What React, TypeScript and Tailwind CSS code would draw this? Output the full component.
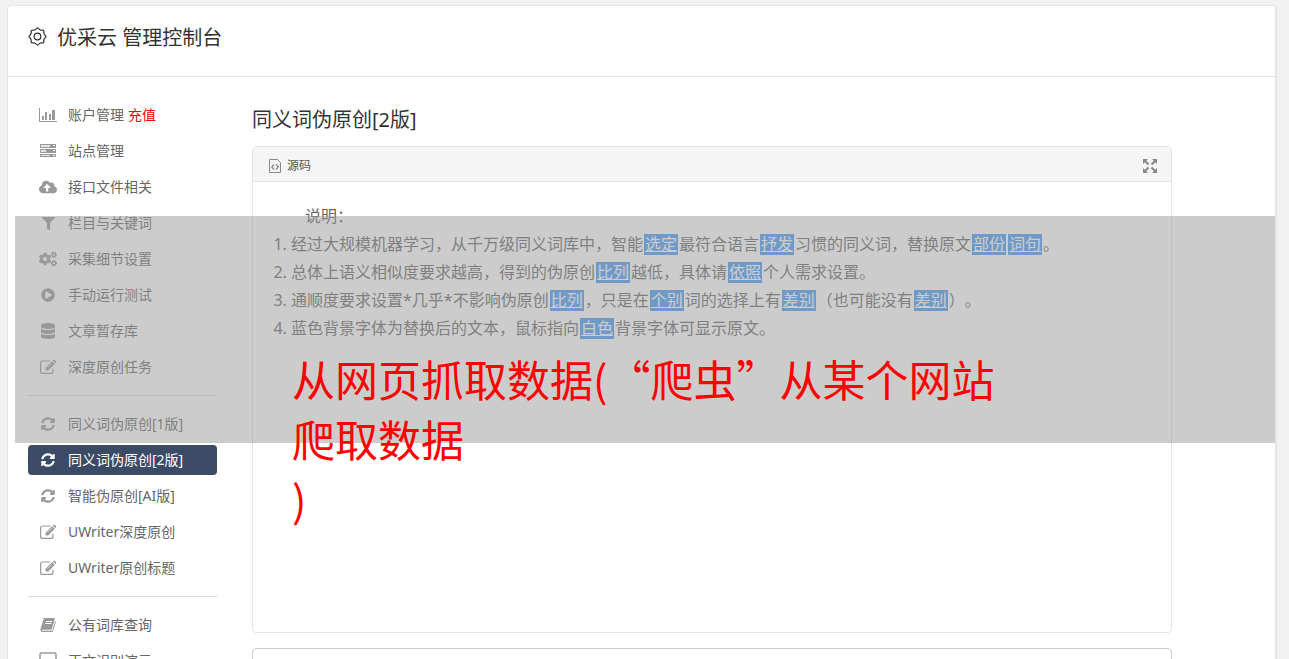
import type { ComponentType, ReactNode } from 'react';
import {
  FaCloudUploadAlt,
  FaCogs,
  FaDatabase,
  FaFilter,
  FaPlayCircle,
  FaSyncAlt,
} from 'react-icons/fa';

type IconType = ComponentType<{ size?: number; className?: string }>;

interface IconProps {
  size?: number;
  className?: string;
}

interface NavItem {
  label: string;
  icon: IconType;
  size: number;
  badge?: string;
  active?: boolean;
}

const BarChartIcon = ({ size = 18, className }: IconProps) => (
  <svg width={size} height={size} viewBox="0 0 18 18" fill="currentColor" className={className} aria-hidden="true">
    <path d="M0 2h1v13h17v1H0z" />
    <path d="M3 10h2v4H3zM6 6h2v8H6zM10 8h2v6h-2zM13 4h3v10h-3z" />
  </svg>
);

const ServerIcon = ({ size = 16, className }: IconProps) => (
  <svg width={size} height={size} viewBox="0 0 16 16" className={className} aria-hidden="true">
    <path fill="currentColor" d="M0 1h16v4H0zM0 6h16v4H0zM0 11h16v3H0z" />
    <path fill="#e4e4e4" d="M1 2h9v2H1zM1 7h5v2H1zM1 12h9v1H1z" />
    <path fill="#fff" d="M13 2h2v1h-2zM13 7h2v1h-2zM13 12h2v1h-2z" />
  </svg>
);

const EditIcon = ({ size = 16, className }: IconProps) => (
  <svg width={size} height={size} viewBox="0 0 16 16" className={className} aria-hidden="true">
    <path
      fill="none"
      stroke="currentColor"
      strokeWidth="1.2"
      d="M10.500 2H2.600C1.500 2 .6 2.900.6 4v8.400c0 1.100.9 2 2 2h8.400c1.100 0 2-.9 2-2V9.800"
    />
    <path fill="currentColor" d="M12.200 2.200l2.600 2.600-6.600 6.700H5.600V8.800zM12.800 1.600l.6-.6c.4-.4 1-.4 1.400 0l1.100 1.100c.4.4.4 1 0 1.400l-.6.6z" />
    <path stroke="#fff" strokeWidth=".6" d="M7.600 8.600l4.300-4.300" />
  </svg>
);

const BookIcon = ({ size = 16, className }: IconProps) => (
  <svg width={size} height={size} viewBox="0 0 16 16" className={className} aria-hidden="true">
    <path
      fill="currentColor"
      d="M5.3 1h8.2c.9 0 1.3.6 1.1 1.4L12 11.6c-.2.8-.8 1.2-1.5 1.2H2.6c-.8 0-.8 1 .1 1h8.6c.6 0 1-.3 1.2-.8l2.6-8.9c.6.3.8.7.6 1.3l-2.5 8.3c-.2.8-.9 1.300-1.700 1.300H2.600C1 15 0 13.500.5 12.100L3.400 2.400C3.700 1.500 4.400 1 5.300 1z"
    />
    <path stroke="#fff" d="M6 4.500h6M5.300 6.500h6" />
  </svg>
);

const ScreenIcon = ({ size = 18, className }: IconProps) => (
  <svg width={size} height={size} viewBox="0 0 18 18" fill="none" stroke="currentColor" strokeWidth="1.500" className={className} aria-hidden="true">
    <rect x="1" y="1" width="16" height="12" rx="1" />
    <path d="M5 17h8M9 13v4" />
  </svg>
);

const GearIcon = () => (
  <svg width="19" height="19" viewBox="0 0 20 20" fill="none" stroke="#333" strokeWidth="1.300" strokeLinejoin="round" aria-hidden="true">
    <path d="M8.100 2.600Q10-.6 11.900 2.600L13.900 3.400Q17.500 2.500 16.600 6.100L17.400 8.100Q20.600 10 17.400 11.900L16.600 13.900Q17.500 17.500 13.900 16.600L11.900 17.400Q10 20.600 8.100 17.400L6.100 16.600Q2.500 17.500 3.400 13.900L2.600 11.900Q-.6 10 2.600 8.100L3.400 6.100Q2.500 2.500 6.100 3.400z" />
    <circle cx="10" cy="10" r="3.500" />
  </svg>
);

const SourceIcon = () => (
  <svg width="12" height="14" viewBox="0 0 12 14" fill="none" stroke="#888" aria-hidden="true">
    <path d="M.5.5h8l3 3v10H.5z" />
    <path strokeWidth="1.300" d="M5 5.500 2.800 8 5 10.500M7 5.500 9.200 8 7 10.500" />
  </svg>
);

const ExpandIcon = () => (
  <svg width="14" height="14" viewBox="0 0 14 14" fill="#888" stroke="#888" strokeWidth="2" aria-hidden="true">
    <path stroke="none" d="M0 0h5L0 5zM14 0H9l5 5zM0 14h5L0 9zM14 14H9l5-5z" />
    <path d="m2 2 3.500 3.500M12 2 8.500 5.500M2 12l3.500-3.500M12 12 8.500 8.500" />
  </svg>
);

const navGroups: NavItem[][] = [
  [
    { label: '账户管理', icon: BarChartIcon, size: 18, badge: '充值' },
    { label: '站点管理', icon: ServerIcon, size: 16 },
    { label: '接口文件相关', icon: FaCloudUploadAlt, size: 18 },
    { label: '栏目与关键词', icon: FaFilter, size: 13 },
    { label: '采集细节设置', icon: FaCogs, size: 18 },
    { label: '手动运行测试', icon: FaPlayCircle, size: 14 },
    { label: '文章暂存库', icon: FaDatabase, size: 16 },
    { label: '深度原创任务', icon: EditIcon, size: 16 },
  ],
  [
    { label: '同义词伪原创[1版]', icon: FaSyncAlt, size: 14 },
    { label: '同义词伪原创[2版]', icon: FaSyncAlt, size: 14, active: true },
    { label: '智能伪原创[AI版]', icon: FaSyncAlt, size: 14 },
    { label: 'UWriter深度原创', icon: EditIcon, size: 16 },
    { label: 'UWriter原创标题', icon: EditIcon, size: 16 },
  ],
  [
    { label: '公有词库查询', icon: BookIcon, size: 16 },
    { label: '正文识别演示', icon: ScreenIcon, size: 18 },
  ],
];

const Mark = ({ children }: { children: ReactNode }) => (
  <a href="#" className="mx-px inline-block bg-[#449bf5] px-px leading-[21px] text-white underline">
    {children}
  </a>
);

const Sidebar = () => (
  <nav className="w-[189px] shrink-0 divide-y divide-[#d9d9d9]">
    {navGroups.map((group, index) => (
      <ul key={index} className="space-y-1.5 py-[13px] first:pt-0">
        {group.map((item) => {
          const Icon = item.icon;
          return (
            <li key={item.label}>
              <a
                href="#"
                className={
                  item.active
                    ? 'flex h-[30px] items-center rounded bg-[#3b4b66] text-sm text-white'
                    : 'flex h-[30px] items-center rounded text-sm text-[#666]'
                }
              >
                <span className="flex w-10 justify-center">
                  <Icon size={item.size} className={item.active ? 'text-white' : 'text-[#999]'} />
                </span>
                {item.label}
                {item.badge && <span className="ml-1 text-[#f00]">{item.badge}</span>}
              </a>
            </li>
          );
        })}
      </ul>
    ))}
  </nav>
);

const SourcePanel = () => (
  <section className="h-[487px] rounded border border-[#e5e5e5]">
    <div className="flex h-[35px] items-center justify-between border-b border-[#e5e5e5] bg-[#f5f5f5] pt-1 pr-3.5 pl-4">
      <h3 className="flex items-center gap-1.5 text-xs text-[#555]">
        <SourceIcon />
        源码
      </h3>
      <button type="button" aria-label="全屏">
        <ExpandIcon />
      </button>
    </div>
    <div className="pt-5 pl-[38px] text-base leading-7 text-[#666]">
      <p className="pl-3.5">说明：</p>
      <ol className="list-decimal">
        <li>
          经过大规模机器学习，从千万级同义词库中，智能<Mark>选定</Mark>最符合语言<Mark>抒发</Mark>习惯的同义词，替换原文<Mark>部份</Mark><Mark>词句</Mark>。
        </li>
        <li>
          总体上语义相似度要求越高，得到的伪原创<Mark>比列</Mark>越低，具体请<Mark>依照</Mark>个人需求设置。
        </li>
        <li>
          通顺度要求设置*几乎*不影响伪原创<Mark>比列</Mark>，只是在<Mark>个别</Mark>词的选择上有<Mark>差别</Mark>（也可能没有<Mark>差别</Mark>）。
        </li>
        <li>
          蓝色背景字体为替换后的文本，鼠标指向<Mark>白色</Mark>背景字体可显示原文。
        </li>
      </ol>
    </div>
  </section>
);

const App = () => {
  return (
    <div
      lang="zh-CN"
      className="relative h-screen overflow-hidden bg-[#f2f2f2] pt-[5px] pr-3 pl-[7px] font-['Noto_Sans','Noto_Sans_CJK_SC',sans-serif] [text-spacing-trim:space-all]"
    >
      <div className="min-h-full rounded-t border border-r-2 border-[#e5e5e5] bg-white">
        <header className="flex h-[71px] items-start gap-2.5 border-b border-[#e5e5e5] px-5 pt-4">
          <span className="flex h-7 items-center">
            <GearIcon />
          </span>
          <h1 className="text-xl leading-8 text-[#333]">优采云 管理控制台</h1>
        </header>

        <div className="flex gap-[35px] px-5 pt-[23px]">
          <Sidebar />
          <main className="max-w-[920px] flex-1 pt-1">
            <h2 className="mb-2.5 text-xl leading-8 text-[#333]">同义词伪原创[2版]</h2>
            <SourcePanel />
            <textarea aria-label="原文" className="mt-[15px] block h-40 w-full resize-none rounded border border-[#ccc]" />
          </main>
        </div>
      </div>

      {/* Headline banner laid over the page */}
      <div className="pointer-events-none absolute top-[216px] right-3.5 left-[15px] h-[227px] bg-[#999]/50 pt-[132px] pl-[277px]">
        <p className="w-[710px] font-['Noto_Sans_CJK_SC',sans-serif] text-[43px] leading-[60px] text-[#f00]">
          从网页抓取数据(“爬虫”从某个网站
          <br />
          爬取数据
          <br />)
        </p>
      </div>
    </div>
  );
};

export default App;
